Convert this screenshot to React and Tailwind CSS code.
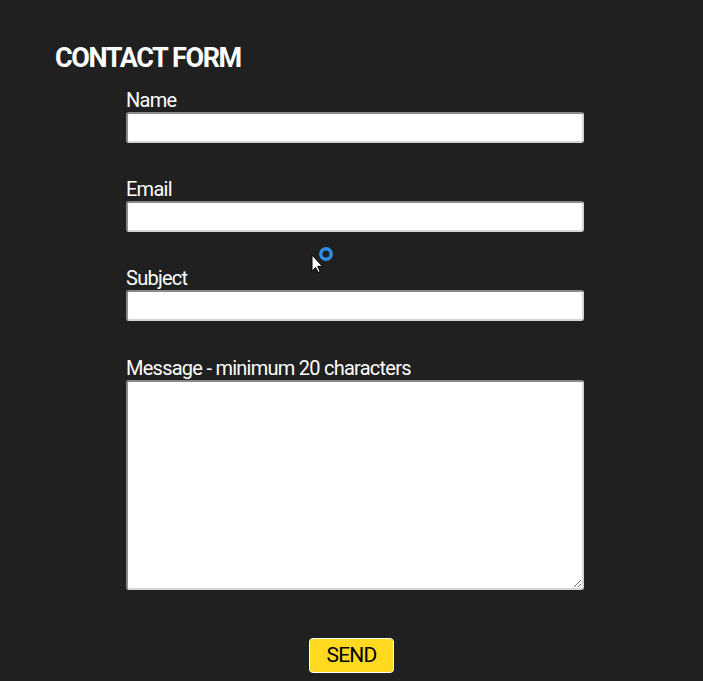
import React from 'react';

function Field({ label, children }) {
  return (
    <div className="mb-[36px]">
      <label className="block text-[20px] leading-[21px] tracking-[-0.75px] text-white mb-[1px]">{label}</label>
      {children}
    </div>
  );
}

const inputCls =
  'block w-[458px] bg-white rounded-[3px] border-2 border-t-[#8a8a8a] border-l-[#8a8a8a] border-b-[#d4d4d4] border-r-[#d4d4d4] outline-none';

export default function App() {
  return (
    <div
      className="relative min-h-[681px] bg-[#202020] pt-[42px]"
      style={{ fontFamily: 'Roboto, "Liberation Sans", sans-serif' }}
    >
      <h1 className="ml-[55px] text-[27px] leading-[32px] font-bold text-white tracking-[-1.4px]">
        CONTACT FORM
      </h1>
      <form className="ml-[126px] mt-[16px]" onSubmit={e => e.preventDefault()}>
        <Field label="Name">
          <input type="text" className={`${inputCls} h-[31px]`} />
        </Field>
        <Field label="Email">
          <input type="email" className={`${inputCls} h-[31px]`} />
        </Field>
        <Field label="Subject">
          <input type="text" className={`${inputCls} h-[31px]`} />
        </Field>
        <div className="pt-[1px]">
          <label className="block text-[20px] leading-[21px] tracking-[-0.75px] text-white mb-[1px]">
            Message - minimum 20 characters
          </label>
          <textarea className={`${inputCls} h-[210px] resize-y`} />
        </div>
      </form>
      <div className="flex justify-center mt-[48px]">
        <button className="w-[85px] h-[35px] bg-[#ffd820] border border-white rounded-[4px] text-[21px] tracking-[-0.8px] text-black leading-none">
          SEND
        </button>
      </div>

      {/* mouse cursor captured in the screenshot */}
      <svg className="absolute left-[311px] top-[247px]" width="24" height="28" viewBox="0 0 24 28">
        <circle cx="15" cy="7" r="5.2" fill="none" stroke="#2f8fe8" strokeWidth="3.4" />
        <path d="M1 8 L1 24 L4.6 20.4 L7.2 25.5 L9.2 24.5 L6.7 19.4 L11.5 19.4 Z" fill="#fff" stroke="#000" strokeWidth="1" />
      </svg>
    </div>
  );
}
